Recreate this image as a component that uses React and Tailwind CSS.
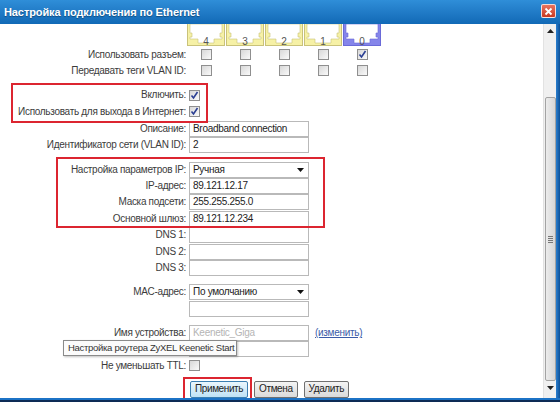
import React from 'react';

const font = "font-['Liberation_Sans',Arial,sans-serif]";

function Check({ checked }) {
  return (
    <div className="w-[11px] h-[11px] border border-[#8f8f8f] bg-gradient-to-br from-[#d8d8d8] to-[#fafafa] flex items-center justify-center">
      {checked && (
        <svg width="9" height="9" viewBox="0 0 9 9">
          <path d="M1.5 4.5 L3.5 7 L7.5 1" fill="none" stroke="#2b3f93" strokeWidth="1.6" />
        </svg>
      )}
    </div>
  );
}

function Port({ n, active }) {
  const frame = active ? '#8585ea' : '#f6f1a6';
  const edge = active ? '#6a6ad8' : '#c9c27a';
  return (
    <svg width="38" height="22" viewBox="0 0 38 22">
      <rect x="0.5" y="-1" width="37" height="22.5" fill={frame} stroke={edge} />
      <path d="M3 0 H35 V9 H33 V13 H35 V15 H27 V19 H11 V15 H3 V13 H5 V9 H3 Z" fill="#fff" stroke={edge} strokeWidth="0.6" />
      <text x="19" y="20.5" textAnchor="middle" fontSize="10" fill="#555" fontFamily="Liberation Sans, Arial, sans-serif">{n}</text>
    </svg>
  );
}

function Field({ value, muted, select, w = 'w-[120px]' }) {
  return (
    <div className={`${w} h-[16px] border border-[#b9b9b9] bg-white flex items-center pl-[3px] pr-[4px] text-[10px] leading-none ${muted ? 'text-[#b5b5b5]' : 'text-[#222]'}`}>
      <span className="flex-1 truncate">{value}</span>
      {select && (
        <svg width="7" height="4" viewBox="0 0 7 4"><path d="M0 0 H7 L3.5 4 Z" fill="#111" /></svg>
      )}
    </div>
  );
}

function Row({ label, children, className = '' }) {
  return (
    <div className={`flex items-center h-[16.5px] ${className}`}>
      <div className="w-[186px] text-right text-[10px] text-[#3c3c3c] leading-none whitespace-nowrap">{label}</div>
      <div className="ml-[3px] flex items-center gap-[6px]">{children}</div>
    </div>
  );
}

function Button({ children, primary }) {
  return (
    <button
      className={`h-[17px] px-[4px] text-[10px] tracking-[-0.4px] leading-none rounded-[2px] border ${
        primary
          ? 'border-[#3c7fb1] bg-gradient-to-b from-[#eaf6fd] to-[#bfe2f5] text-[#222]'
          : 'border-[#707070] bg-gradient-to-b from-[#f4f4f4] to-[#dadada] text-[#222]'
      }`}
    >
      {children}
    </button>
  );
}

export default function App() {
  return (
    <div className={`w-[560px] h-[402px] relative overflow-hidden bg-white tracking-[-0.3px] ${font}`}>
      <div className="h-[24px] bg-gradient-to-b from-[#2f8ed8] to-[#1169b6] flex items-center justify-between pl-[4px] pr-[4px]">
        <span className="text-white font-bold text-[11px] tracking-[-0.1px] [text-shadow:0_1px_1px_rgba(0,0,0,0.35)]">Настройка подключения по Ethernet</span>
        <div className="w-[15px] h-[14px] rounded-[2px] border border-white/80 bg-gradient-to-b from-[#e8735f] to-[#c9381f] flex items-center justify-center mb-[2px]">
          <svg width="9" height="9" viewBox="0 0 9 9"><path d="M1.5 1.5 L7.5 7.5 M7.5 1.5 L1.5 7.5" stroke="#fff" strokeWidth="1.8" /></svg>
        </div>
      </div>

      <div className="flex h-[374px]">
        <div className="flex-1 flex flex-col">
          <div className="flex pl-[187px] gap-[1px]">
            <Port n="4" />
            <Port n="3" />
            <Port n="2" />
            <Port n="1" />
            <Port n="0" active />
          </div>

          <div className="flex items-center h-[16px] mt-[1px]">
            <div className="w-[186px] text-right text-[10px] text-[#3c3c3c] leading-none">Использовать разъем:</div>
            <div className="ml-[14.5px] flex gap-[28px]">
              <Check /><Check /><Check /><Check /><Check checked />
            </div>
          </div>
          <div className="flex items-center h-[16px]">
            <div className="w-[186px] text-right text-[10px] text-[#3c3c3c] leading-none">Передавать теги VLAN ID:</div>
            <div className="ml-[14.5px] flex gap-[28px]">
              <Check /><Check /><Check /><Check /><Check />
            </div>
          </div>

          <Row label="Включить:" className="mt-[8px]"><Check checked /></Row>
          <Row label="Использовать для выхода в Интернет:"><Check checked /></Row>
          <Row label="Описание:" className="mt-[0.5px]"><Field value="Broadband connection" /></Row>
          <Row label="Идентификатор сети (VLAN ID):"><Field value="2" /></Row>

          <Row label="Настройка параметров IP:" className="mt-[8px]"><Field value="Ручная" select /></Row>
          <Row label="IP-адрес:"><Field value="89.121.12.17" /></Row>
          <Row label="Маска подсети:"><Field value="255.255.255.0" /></Row>
          <Row label="Основной шлюз:"><Field value="89.121.12.234" /></Row>
          <Row label="DNS 1:"><Field value="" /></Row>
          <Row label="DNS 2:"><Field value="" /></Row>
          <Row label="DNS 3:"><Field value="" /></Row>

          <Row label="MAC-адрес:" className="mt-[7.5px]"><Field value="По умолчанию" select /></Row>
          <Row label=""><Field value="" /></Row>

          <Row label="Имя устройства:" className="mt-[7.5px]">
            <Field value="Keenetic_Giga" muted />
            <span className="text-[10px] text-[#3b5ca8] underline">(изменить)</span>
          </Row>
          <Row label=""><Field value="" /></Row>
          <Row label="Не уменьшать TTL:"><Check /></Row>

          <div className="flex pl-[190px] gap-[6px] mt-[7px]">
            <Button primary>Применить</Button>
            <Button>Отмена</Button>
            <Button>Удалить</Button>
          </div>
        </div>

        <div className="w-[13px] bg-[#f0f0f0] border-l border-[#e2e2e2] flex flex-col items-center">
          <svg width="7" height="4" viewBox="0 0 7 4" className="mt-[5px]"><path d="M0 4 H7 L3.5 0 Z" fill="#222" /></svg>
          <div className="mt-[64px] w-[11px] h-[284px] rounded-[2px] border border-[#a3a3a3] bg-gradient-to-r from-[#ececec] to-[#d6d6d6] flex items-center justify-center">
            <div className="flex flex-col gap-[1px]">
              <div className="w-[5px] h-px bg-[#777]" />
              <div className="w-[5px] h-px bg-[#777]" />
              <div className="w-[5px] h-px bg-[#777]" />
              <div className="w-[5px] h-px bg-[#777]" />
            </div>
          </div>
          <svg width="7" height="4" viewBox="0 0 7 4" className="mt-[5px]"><path d="M0 0 H7 L3.5 4 Z" fill="#222" /></svg>
        </div>
        <div className="w-[4px] bg-gradient-to-r from-[#2a7fcf] to-[#0c4f95]" />
      </div>

      <div className="h-[2px] bg-[#1c73c6]" />
      <div className="h-[2px] bg-[#0d2b55]" />

      <div className="absolute left-[11px] top-[83px] w-[197px] h-[40px] border-2 border-[#dc2530]" />
      <div className="absolute left-[56px] top-[157px] w-[269px] h-[71px] border-2 border-[#dc2530]" />
      <div className="absolute left-[183px] top-[377px] w-[69px] h-[21px] border-2 border-b-0 border-[#dc2530]" />

      <div className="absolute left-[63px] top-[340px] w-[174px] h-[16px] pl-[4px] border border-[#8a8a8a] bg-[#fbfbfb] shadow-[1px_1px_2px_rgba(0,0,0,0.25)] flex items-center overflow-hidden text-[9.5px] text-[#333] leading-none whitespace-nowrap">
        Настройка роутера ZyXEL Keenetic Start
      </div>
    </div>
  );
}
